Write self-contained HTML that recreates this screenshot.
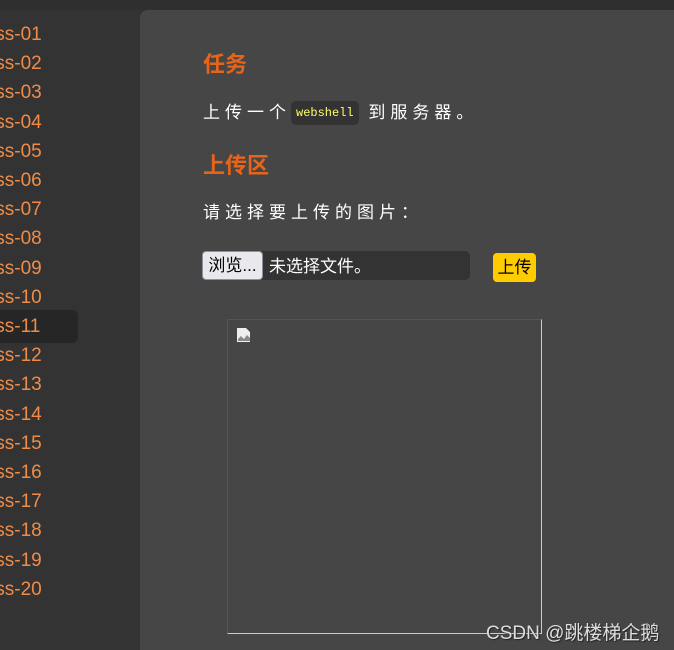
<!DOCTYPE html>
<html style="height:650px;overflow:hidden"><head><meta charset="utf-8"><style>
body{margin:0;width:674px;height:650px;background:#333;overflow:hidden;position:relative;font-family:"Liberation Sans","Noto Sans CJK SC",sans-serif}
.top{position:absolute;left:0;top:0;width:674px;height:10px;background:#2f2f2f}
.side{position:absolute;left:0;top:20px}
.it{position:absolute;left:-28px;height:29px;line-height:29px;font-size:19px;color:#f08c48;white-space:nowrap;width:104px}
.sel{position:absolute;left:-10px;top:310px;width:88px;height:33px;background:#262626;border-radius:6px}
.main{position:absolute;left:140px;top:10px;width:560px;height:640px;background:#464646;border-radius:8px 0 0 0}
h2{position:absolute;margin:0;font-size:22px;color:#e8641a;font-weight:bold}
.p{position:absolute;color:#fff;font-size:17px;letter-spacing:5px;white-space:nowrap}
code{font-family:"Liberation Mono",monospace;font-size:12px;color:#ffff66;background:#333;border-radius:5px;padding:5px 5px;letter-spacing:0;position:relative;top:-2px}
.file{position:absolute;left:202px;top:251px;width:268px;height:29px;background:#333;border-radius:5px}
.btn{position:absolute;left:0;top:0;width:59px;height:27px;background:#e9e9ed;border:1px solid #8f8f9d;border-radius:4px;font-size:17px;line-height:27px;text-align:center;color:#000}
.ft{position:absolute;left:67px;top:0;line-height:31px;color:#fff;font-size:17px}
.up{position:absolute;left:493px;top:253px;width:43px;height:29px;background:#ffcc00;border-radius:4px;font-size:17px;line-height:29px;text-align:center;color:#000}
.img{position:absolute;left:227px;top:319px;width:313px;height:313px;border-top:1px solid #555;border-left:1px solid #555;border-right:1px solid #ccc;border-bottom:1px solid #ccc}
.wm{position:absolute;left:486px;top:618px;font-size:19px;color:#ddd;text-shadow:1px 1px 1px #222;white-space:nowrap}
</style></head><body>
<div class="top"></div>
<div class="sel"></div>
<div class="side">
<div class="it" style="top:0">Pass-01</div>
<div class="it" style="top:29px">Pass-02</div>
<div class="it" style="top:58px">Pass-03</div>
<div class="it" style="top:88px">Pass-04</div>
<div class="it" style="top:117px">Pass-05</div>
<div class="it" style="top:146px">Pass-06</div>
<div class="it" style="top:175px">Pass-07</div>
<div class="it" style="top:204px">Pass-08</div>
<div class="it" style="top:234px">Pass-09</div>
<div class="it" style="top:263px">Pass-10</div>
<div class="it" style="top:292px">Pass-11</div>
<div class="it" style="top:321px">Pass-12</div>
<div class="it" style="top:350px">Pass-13</div>
<div class="it" style="top:380px">Pass-14</div>
<div class="it" style="top:409px">Pass-15</div>
<div class="it" style="top:438px">Pass-16</div>
<div class="it" style="top:467px">Pass-17</div>
<div class="it" style="top:496px">Pass-18</div>
<div class="it" style="top:526px">Pass-19</div>
<div class="it" style="top:555px">Pass-20</div>
</div>
<div class="main"></div>
<h2 style="left:203px;top:47px">任务</h2>
<div class="p" style="left:203px;top:98px">上传一个<code>webshell</code> 到服务器。</div>
<h2 style="left:203px;top:148px">上传区</h2>
<div class="p" style="left:203px;top:198px">请选择要上传的图片：</div>
<div class="file"><div class="btn">浏览...</div><div class="ft">未选择文件。</div></div>
<div class="up">上传</div>
<div class="img"><svg style="position:absolute;left:8px;top:7px" width="16" height="16"><path d="M1 1h9l4 4v10H1z" fill="#eee"/><path d="M2 12l3-3 3 3 3-4 3 3v3H2z" fill="#888"/></svg></div>
<div class="wm">CSDN @跳楼梯企鹅</div>
</body></html>
